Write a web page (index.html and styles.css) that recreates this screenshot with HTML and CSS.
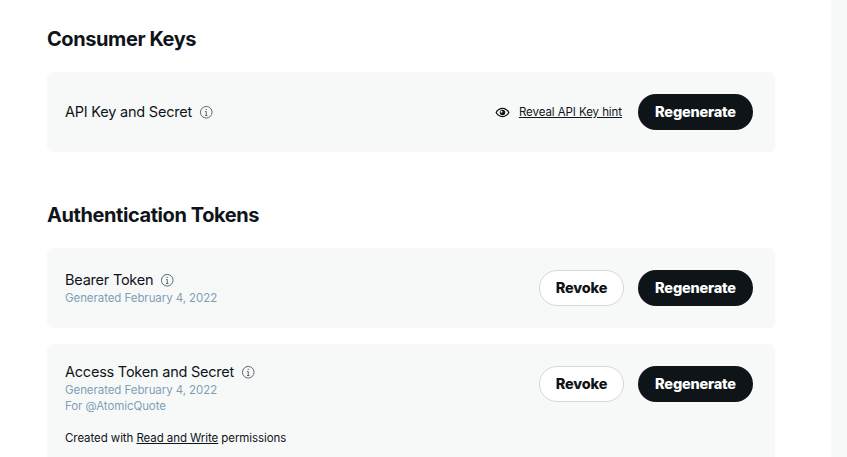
FILE: index.html
```html
<!DOCTYPE html>
<html lang="en">
<head>
<meta charset="utf-8">
<title>Keys and tokens</title>
<link rel="stylesheet" href="styles.css">
</head>
<body>
<div class="page">
<main class="main">
  <section class="section">
    <h2 class="heading">Consumer Keys</h2>
    <div class="card">
      <div class="info">
        <div class="title">API Key and Secret
          <svg class="info-icon" viewBox="0 0 24 24"><circle cx="12" cy="12" r="9.6"/><path d="M12 10.6v7M10 10.800h2M10 17.400h4"/><circle class="dot" cx="12" cy="7.200" r="1.200"/></svg>
        </div>
      </div>
      <div class="actions">
        <svg class="eye" viewBox="0 0 24 24"><path fill-rule="evenodd" d="M12 4.500C6.800 4.500 2.600 7.900.800 12c1.800 4.100 6 7.500 11.200 7.500s9.400-3.400 11.200-7.500C21.400 7.900 17.200 4.500 12 4.500zm0 13c-3.900 0-7.200-2.200-9-5.500 1.800-3.300 5.100-5.500 9-5.500s7.200 2.200 9 5.500c-1.800 3.300-5.100 5.500-9 5.500z"/><path fill-rule="evenodd" d="M12 7.600a4.400 4.400 0 1 0 0 8.800 4.400 4.400 0 0 0 0-8.800zm-1.500 1.600a1.600 1.600 0 1 1 0 3.200 1.600 1.600 0 0 1 0-3.200z"/></svg>
        <a class="hint" href="#">Reveal API Key hint</a>
        <button class="btn btn-dark">Regenerate</button>
      </div>
    </div>
  </section>
  <section class="section section-tokens">
    <h2 class="heading">Authentication Tokens</h2>
    <div class="card">
      <div class="info">
        <div class="title">Bearer Token
          <svg class="info-icon" viewBox="0 0 24 24"><circle cx="12" cy="12" r="9.6"/><path d="M12 10.6v7M10 10.800h2M10 17.400h4"/><circle class="dot" cx="12" cy="7.200" r="1.200"/></svg>
        </div>
        <div class="meta">Generated February 4, 2022</div>
      </div>
      <div class="actions">
        <button class="btn btn-light">Revoke</button>
        <button class="btn btn-dark">Regenerate</button>
      </div>
    </div>
    <div class="card card-top">
      <div class="info">
        <div class="title">Access Token and Secret
          <svg class="info-icon" viewBox="0 0 24 24"><circle cx="12" cy="12" r="9.6"/><path d="M12 10.6v7M10 10.800h2M10 17.400h4"/><circle class="dot" cx="12" cy="7.200" r="1.200"/></svg>
        </div>
        <div class="meta">Generated February 4, 2022</div>
        <div class="meta">For @AtomicQuote</div>
        <p class="perm">Created with <a href="#">Read and Write</a> permissions</p>
      </div>
      <div class="actions actions-top">
        <button class="btn btn-light">Revoke</button>
        <button class="btn btn-dark">Regenerate</button>
      </div>
    </div>
  </section>
</main>
<aside class="side"></aside>
</div>
</body>
</html>
```
FILE: styles.css
```css
* { box-sizing: border-box; }
html, body { margin: 0; height: 457px; overflow: hidden; background: #fff; }
body { font-family: Inter, "Liberation Sans", sans-serif; color: #0f1419; }
.page { display: flex; height: 457px; overflow: hidden; }
.main { width: 831px; padding: 27px 56px 0 47px; flex: none; }
.side { flex: 1; background: #f7f9f9; }
.section-tokens { margin-top: 51px; }
.heading { margin: 0 0 21px; font-size: 20px; line-height: 24px; font-weight: 700; letter-spacing: -0.42px; }
.card { display: flex; justify-content: space-between; align-items: center; min-height: 80px; padding: 0 22px 0 18px; background: #f7f9f9; border-radius: 6px; margin-bottom: 16px; }
.card-top { align-items: flex-start; padding-top: 18px; padding-bottom: 20px; }
.title { display: flex; align-items: center; font-size: 14.5px; line-height: 20px; font-weight: 400; letter-spacing: -0.22px; }
.info-icon { width: 14.5px; height: 14.5px; margin-left: 7px; fill: none; stroke: #536471; stroke-width: 1.6; flex: none; }
.info-icon .dot { fill: #536471; stroke: none; }
.meta { font-size: 11.5px; line-height: 16px; letter-spacing: -0.07px; color: #829eb5; }
.perm { margin: 16px 0 0; font-size: 11.5px; line-height: 16px; letter-spacing: -0.08px; }
.perm a, .hint { color: #0f1419; text-decoration: underline; }
.actions { display: flex; align-items: center; flex: none; }
.actions-top { margin-top: 4px; }
.eye { width: 15px; height: 15px; fill: #0f1419; margin-right: 9px; }
.hint { font-size: 11.5px; line-height: 16px; letter-spacing: -0.07px; margin-right: 16px; }
.btn { height: 36px; border-radius: 18px; font-family: inherit; font-size: 14.5px; font-weight: 800; letter-spacing: -0.17px; padding: 0 0 2px; }
.btn-dark { width: 115px; background: #0f1419; color: #fff; border: 0; }
.btn-light { width: 85px; background: #fff; color: #0f1419; border: 1px solid #cfd9de; margin-right: 14px; }
```
